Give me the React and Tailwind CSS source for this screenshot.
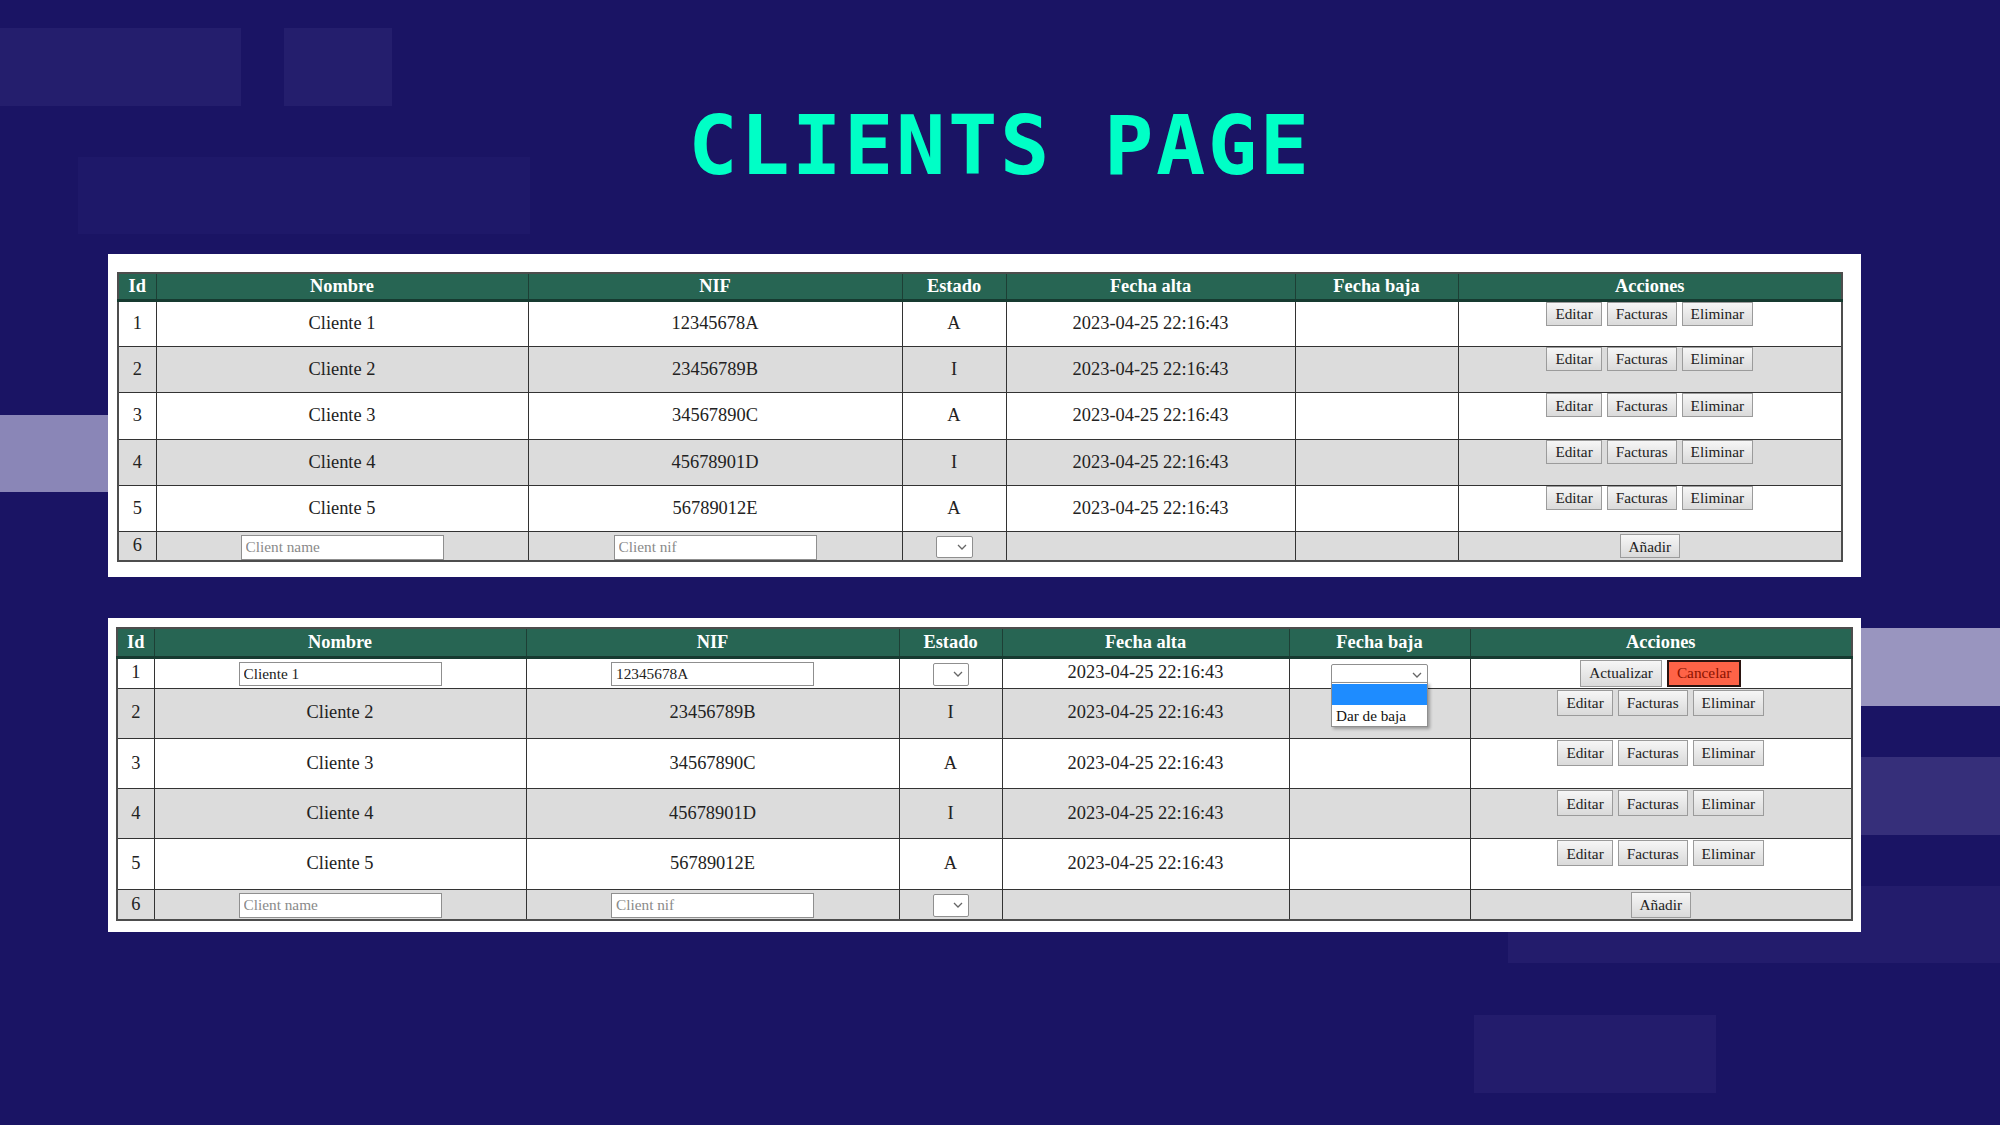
import React from 'react';

const clientes = [
  { id: 1, nombre: 'Cliente 1', nif: '12345678A', estado: 'A' },
  { id: 2, nombre: 'Cliente 2', nif: '23456789B', estado: 'I' },
  { id: 3, nombre: 'Cliente 3', nif: '34567890C', estado: 'A' },
  { id: 4, nombre: 'Cliente 4', nif: '45678901D', estado: 'I' },
  { id: 5, nombre: 'Cliente 5', nif: '56789012E', estado: 'A' },
];

const FECHA = '2023-04-25 22:16:43';
const headers = ['Id', 'Nombre', 'NIF', 'Estado', 'Fecha alta', 'Fecha baja', 'Acciones'];

const base = 'border border-[#333] text-center p-0';
const cell = `${base} align-middle`;

function Btn({ children, size, className = '' }) {
  return (
    <button
      className={`${size} px-[8px] border border-[#9b9b9b] bg-linear-to-b from-[#f6f6f6] to-[#dadada] text-[15.3px] leading-none text-[#222] ${className}`}
    >
      {children}
    </button>
  );
}

function FakeSelect({ className }) {
  return (
    <div
      className={`inline-flex items-center justify-end bg-white border border-[#8f8f8f] rounded-[2px] pr-[5px] align-middle ${className}`}
    >
      <svg width="10" height="6" viewBox="0 0 10 6">
        <path d="M1 1l4 4 4-4" fill="none" stroke="#666" strokeWidth="1.3" />
      </svg>
    </div>
  );
}

function TextInput({ placeholder, value, className }) {
  return (
    <input
      readOnly
      placeholder={placeholder}
      defaultValue={value}
      className={`w-[203px] border border-[#8f8f8f] bg-white px-[4px] text-left text-[15.3px] text-[#222] placeholder:text-[#8a8a8a] align-middle outline-none ${className}`}
    />
  );
}

function ClientsTable({ cols, tableW, headH, rowH, editH, lastH, btn, btnTop, inputH, selH, editing }) {
  return (
    <table className={`${tableW} table-fixed border-collapse border-2 border-[#4d4d4d] font-['Liberation_Serif',serif] text-[#222]`}>
      <colgroup>
        {cols.map((w, i) => (
          <col key={i} className={w} />
        ))}
      </colgroup>
      <thead>
        <tr>
          {headers.map((h) => (
            <th
              key={h}
              className={`${headH} bg-[#276553] text-white font-bold text-[18.4px] leading-none border border-[#1d3f35] border-b-[3px] border-b-[#163a30] p-0`}
            >
              {h}
            </th>
          ))}
        </tr>
      </thead>
      <tbody className="text-[18.4px]">
        {clientes.map((c, i) => {
          const isEdit = editing && i === 0;
          const h = isEdit ? editH : rowH;
          const bg = i % 2 === 0 ? 'bg-white' : 'bg-[#dcdcdc]';
          return (
            <tr key={c.id} className={bg}>
              <td className={`${cell} ${h}`}>{c.id}</td>
              <td className={cell}>
                {isEdit ? <TextInput value={c.nombre} className="h-[24px]" /> : c.nombre}
              </td>
              <td className={cell}>
                {isEdit ? <TextInput value={c.nif} className="h-[24px]" /> : c.nif}
              </td>
              <td className={cell}>
                {isEdit ? <FakeSelect className="w-[36px] h-[23px]" /> : c.estado}
              </td>
              <td className={cell}>{FECHA}</td>
              <td className={cell}>
                {isEdit && (
                  <div className="relative inline-block align-middle">
                    <FakeSelect className="w-[97px] h-[22px]" />
                    <div className="absolute left-0 top-[22px] z-20 w-[97px] bg-white border border-[#8f8f8f] shadow-[2px_2px_3px_rgba(0,0,0,0.3)] text-left">
                      <div className="h-[21px] mt-[1px] bg-[#1e8cff]" />
                      <div className="h-[21px] pl-[4px] text-[15.2px] leading-[21px] text-[#111]">Dar de baja</div>
                    </div>
                  </div>
                )}
              </td>
              {isEdit ? (
                <td className={cell}>
                  <div className="flex justify-center gap-[5px]">
                    <Btn size="h-[27px]">Actualizar</Btn>
                    <button className="h-[27px] px-[8px] border-2 border-[#2a1410] bg-[#ff6347] text-[15.3px] leading-none text-[#8b1200]">
                      Cancelar
                    </button>
                  </div>
                </td>
              ) : (
                <td className={`${base} align-top`}>
                  <div className={`flex justify-center gap-[5px] ${btnTop}`}>
                    <Btn size={btn}>Editar</Btn>
                    <Btn size={btn}>Facturas</Btn>
                    <Btn size={btn}>Eliminar</Btn>
                  </div>
                </td>
              )}
            </tr>
          );
        })}
        <tr className="bg-[#dcdcdc]">
          <td className={`${cell} ${lastH}`}>6</td>
          <td className={cell}>
            <TextInput placeholder="Client name" className={inputH} />
          </td>
          <td className={cell}>
            <TextInput placeholder="Client nif" className={inputH} />
          </td>
          <td className={cell}>
            <FakeSelect className={selH} />
          </td>
          <td className={cell} />
          <td className={cell} />
          <td className={cell}>
            <div className="flex justify-center">
              <Btn size={btn}>Añadir</Btn>
            </div>
          </td>
        </tr>
      </tbody>
    </table>
  );
}

export default function App() {
  return (
    <div className="relative w-[2000px] h-[1125px] overflow-hidden bg-[#1a1464]">
      {/* background blocks */}
      <div className="absolute left-0 top-[28px] w-[241px] h-[78px] bg-[#241e6d]" />
      <div className="absolute left-[284px] top-[28px] w-[108px] h-[78px] bg-[#241e6d]" />
      <div className="absolute left-[78px] top-[157px] w-[452px] h-[77px] bg-[#1e1869]" />
      <div className="absolute left-0 top-[415px] w-[140px] h-[77px] bg-[#8a86b7]" />
      <div className="absolute left-[1700px] top-[628px] w-[300px] h-[78px] bg-[#9995bf]" />
      <div className="absolute left-[1700px] top-[757px] w-[300px] h-[78px] bg-[#362f7a]" />
      <div className="absolute left-[1508px] top-[886px] w-[492px] h-[77px] bg-[#231c6c]" />
      <div className="absolute left-[1474px] top-[1015px] w-[242px] h-[78px] bg-[#231c6c]" />

      <div className="relative z-10">
        <h1 className="pt-[105px] h-[187px] text-center font-['DejaVu_Sans_Mono',monospace] font-bold text-[82px] leading-none tracking-[2.6px] text-[#00ffc6]">
          CLIENTS PAGE
        </h1>

        <div className="mt-[67px] ml-[108px] w-[1753px] bg-white pt-[18px] pb-[15px] pl-[9px]">
          <ClientsTable
            cols={['w-[38px]', 'w-[372px]', 'w-[374px]', 'w-[104px]', 'w-[289px]', 'w-[163px]', 'w-[384px]']}
            tableW="w-[1724px]"
            headH="h-[27px]"
            rowH="h-[46.4px]"
            editH="h-[46.4px]"
            lastH="h-[27px]"
            btn="h-[24px]"
            btnTop="pt-0"
            inputH="h-[25px]"
            selH="w-[37px] h-[22px]"
            editing={false}
          />
        </div>

        <div className="mt-[41px] ml-[108px] w-[1753px] bg-white pt-[9px] pb-[11px] pl-[8px]">
          <ClientsTable
            cols={['w-[37px]', 'w-[372px]', 'w-[373px]', 'w-[103px]', 'w-[287px]', 'w-[181px]', 'w-[382px]']}
            tableW="w-[1735px]"
            headH="h-[29px]"
            rowH="h-[50.3px]"
            editH="h-[31px]"
            lastH="h-[31px]"
            btn="h-[26px]"
            btnTop="pt-[1px]"
            inputH="h-[25px]"
            selH="w-[36px] h-[23px]"
            editing={true}
          />
        </div>
      </div>
    </div>
  );
}
